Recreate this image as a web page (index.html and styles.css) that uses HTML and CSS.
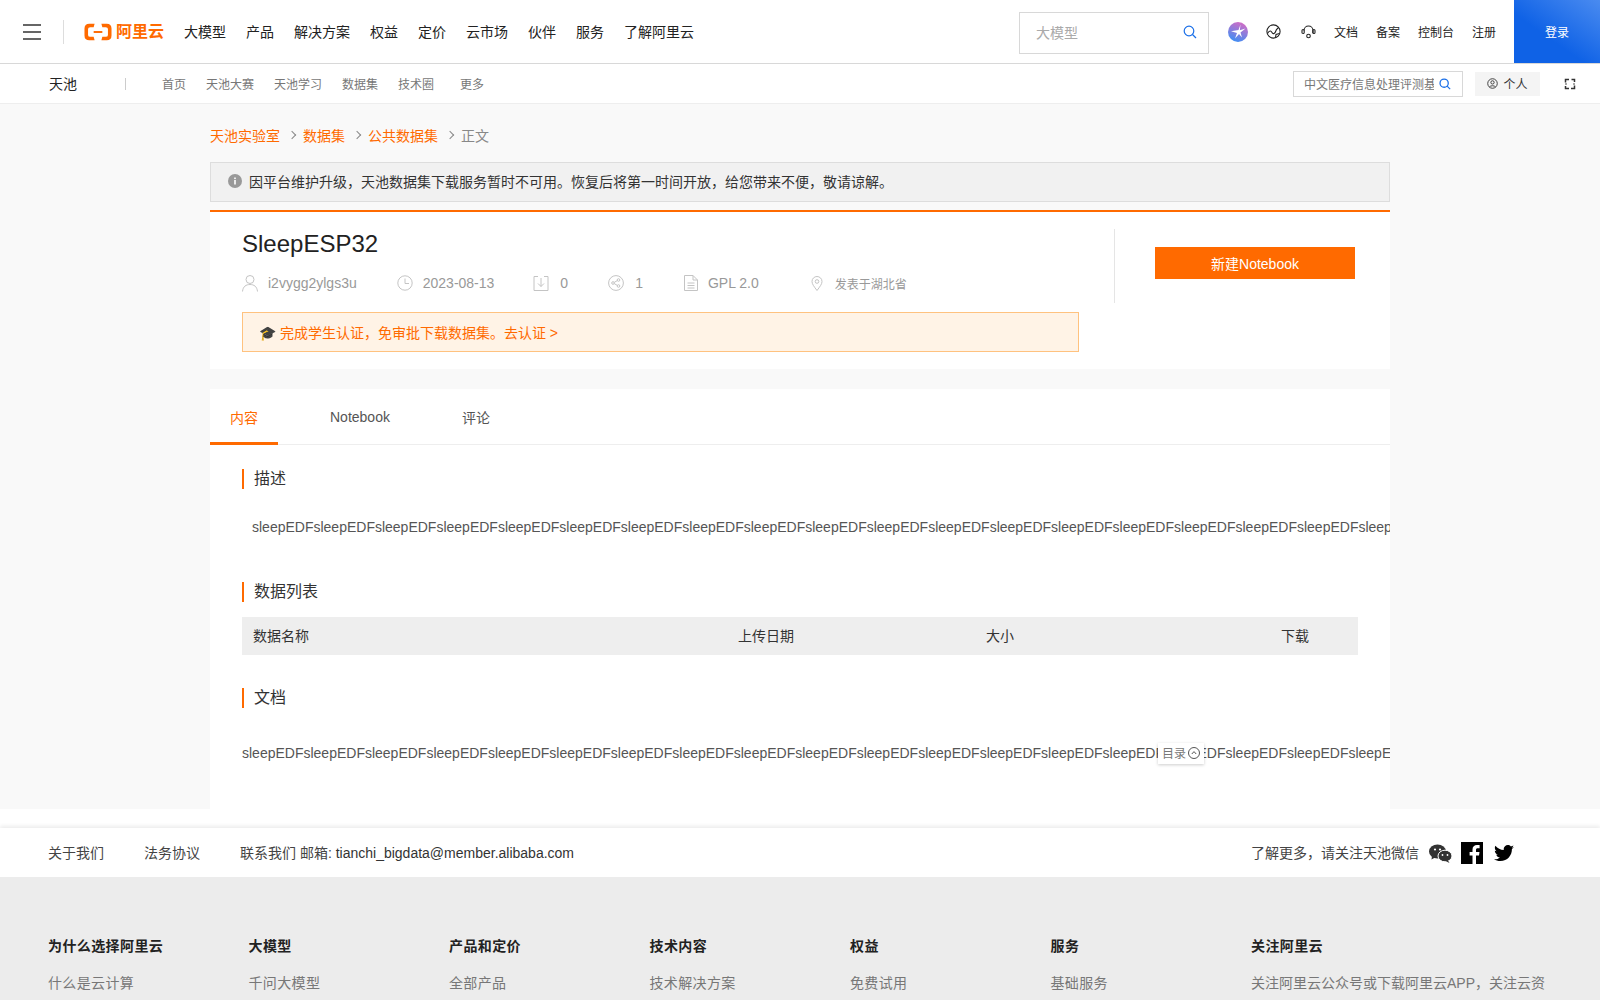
FILE: index.html
```html
<!DOCTYPE html>
<html lang="zh-CN">
<head>
    <meta charset="UTF-8">
    <meta name="viewport" content="width=device-width, initial-scale=1.0">
    <title>SleepESP32_数据集-阿里云天池</title>
    <link rel="stylesheet" href="styles.css">
</head>
<body>
<div class="page">

    <!-- 顶部导航 -->
    <header class="topbar">
        <div class="hamburger"><span></span><span></span><span></span></div>
        <div class="top-divider"></div>
        <a class="logo">
            <svg width="28" height="18" viewBox="0 0 29 18">
                <path d="M11 .5H5.500Q.5 .5 .5 5.500V12.500Q.5 17.500 5.500 17.500H11L10 14H6.500Q4.200 14 4.200 12V6Q4.200 4 6.500 4H10Z" fill="#ff6a00"/>
                <path d="M18 .5H23.500Q28.500 .5 28.500 5.500V12.500Q28.500 17.500 23.500 17.500H18L19 14H22.500Q24.800 14 24.800 12V6Q24.800 4 22.500 4H19Z" fill="#ff6a00"/>
                <rect x="10" y="8" width="9" height="2" fill="#ff6a00"/>
            </svg>
            <span class="logo-text">阿里云</span>
        </a>
        <nav class="main-nav">
            <a>大模型</a><a>产品</a><a>解决方案</a><a>权益</a><a>定价</a><a>云市场</a><a>伙伴</a><a>服务</a><a>了解阿里云</a>
        </nav>
        <div class="top-search">
            <span class="top-search-text">大模型</span>
            <svg width="14" height="14" viewBox="0 0 14 14" fill="none" stroke="#1a6fe8" stroke-width="1.2"><circle cx="6" cy="6" r="4.8"/><path d="M9.500 9.500L13 13"/></svg>
        </div>
        <div class="top-tools">
            <svg class="tool-ai" width="20" height="20" viewBox="0 0 20 20">
                <defs><linearGradient id="aiGrad" x1="0.7" y1="0" x2="0.3" y2="1"><stop offset="0" stop-color="#d56cc4"/><stop offset="1" stop-color="#3b8ff5"/></linearGradient></defs>
                <circle cx="10" cy="10" r="10" fill="url(#aiGrad)"/>
                <path d="M12.500 2.500L10.500 8L3 9.200L9 11L7 16.500L11 12L14 15.500L12.500 10.500L17.500 6.500L11.800 8.200Z" fill="#fff"/>
            </svg>
            <svg class="tool-globe" width="15" height="15" viewBox="0 0 15 15" fill="none" stroke="#222" stroke-width="1.100"><circle cx="7.500" cy="7.500" r="6.600"/><path d="M1.500 9.500C3.500 6 5 6.500 6 8.500S9 10 10.500 5.500L12.500 3.500M9.500 13.500L10 10.500L13.500 9.500"/></svg>
            <svg class="tool-head" width="15" height="15" viewBox="0 0 15 15" fill="none" stroke="#222" stroke-width="1.100"><path d="M3 6.500A4.500 4.500 0 0 1 12 6.500V9"/><rect x="1" y="5.500" width="2.200" height="4" rx="1.100"/><rect x="11.800" y="5.500" width="2.200" height="4" rx="1.100"/><circle cx="7.500" cy="12" r="1.800"/></svg>
            <a>文档</a><a>备案</a><a>控制台</a><a>注册</a>
        </div>
        <a class="login-btn">登录</a>
    </header>

    <!-- 天池导航 -->
    <div class="subbar">
        <span class="sub-brand">天池</span>
        <span class="sub-divider"></span>
        <nav class="sub-nav">
            <a>首页</a><a>天池大赛</a><a>天池学习</a><a>数据集</a><a>技术圈</a><a class="sub-more">更多</a>
        </nav>
        <div class="sub-search">
            <span>中文医疗信息处理评测基</span>
            <svg width="12" height="12" viewBox="0 0 14 14" fill="none" stroke="#1a6fe8" stroke-width="1.500"><circle cx="6" cy="6" r="4.800"/><path d="M9.500 9.500L13 13"/></svg>
        </div>
        <a class="sub-personal">
            <svg width="11" height="11" viewBox="0 0 12 12" fill="none" stroke="#333" stroke-width="1"><circle cx="6" cy="6" r="5.200"/><circle cx="6" cy="4.800" r="1.800"/><path d="M2.800 9.800C3.600 8 8.400 8 9.200 9.800"/></svg>
            个人
        </a>
        <svg class="sub-switch" width="12" height="12" viewBox="0 0 12 12" fill="none" stroke="#333" stroke-width="1.500"><path d="M5 1.500H1.500V4.500M7.500 1.500H10.500V4M5 10.500H1.500V8M7 10.500H10.500V7.500"/><circle cx="2" cy="6" r=".8" fill="#333" stroke="none"/><circle cx="10" cy="6" r=".8" fill="#333" stroke="none"/></svg>
    </div>

    <main class="main">
        <div class="breadcrumb">
            <a>天池实验室</a><i class="crumb-arrow"></i><a>数据集</a><i class="crumb-arrow"></i><a>公共数据集</a><i class="crumb-arrow"></i><span>正文</span>
        </div>

        <div class="notice">
            <svg width="14" height="14" viewBox="0 0 14 14"><circle cx="7" cy="7" r="7" fill="#999"/><rect x="6.200" y="6" width="1.600" height="4.500" fill="#fff"/><rect x="6.200" y="3.500" width="1.600" height="1.600" fill="#fff"/></svg>
            <span>因平台维护升级，天池数据集下载服务暂时不可用。恢复后将第一时间开放，给您带来不便，敬请谅解。</span>
        </div>

        <section class="head-card">
            <div class="head-left">
                <h1>SleepESP32</h1>
                <div class="meta">
                    <span class="meta-item meta-user">
                        <svg width="16" height="18" viewBox="0 0 16 18" fill="none" stroke="#c4c4c4"><circle cx="8" cy="5.500" r="4"/><path d="M.5 17.500C1 12.500 4 10.500 8 10.500S15 12.500 15.500 17.500"/></svg>
                        i2vygg2ylgs3u
                    </span>
                    <span class="meta-item meta-date">
                        <svg width="16" height="16" viewBox="0 0 16 16" fill="none" stroke="#c4c4c4"><circle cx="8" cy="8" r="7.200"/><path d="M8 3.500V8.500H12"/></svg>
                        2023-08-13
                    </span>
                    <span class="meta-item meta-down">
                        <svg width="16" height="16" viewBox="0 0 16 16" fill="none" stroke="#c4c4c4"><path d="M5 1.500H1V15.500H15V1.500H11M8 3V11.500M5 8.500L8 11.500L11 8.500"/></svg>
                        0
                    </span>
                    <span class="meta-item meta-share">
                        <svg width="16" height="16" viewBox="0 0 16 16" fill="none" stroke="#c4c4c4"><circle cx="8" cy="8" r="7.400"/><circle cx="5" cy="8" r="1.300"/><circle cx="10.500" cy="5" r="1.300"/><circle cx="10.500" cy="11" r="1.300"/><path d="M6.200 7.400L9.300 5.600M6.200 8.600L9.300 10.400"/></svg>
                        1
                    </span>
                    <span class="meta-item meta-license">
                        <svg width="14" height="16" viewBox="0 0 14 16" fill="none" stroke="#c4c4c4"><path d="M.5 .5H9L13.500 5V15.500H.5ZM9 .5V5H13.500M3.500 8H10.500M3.500 10.500H10.500M3.500 13H10.500"/></svg>
                        GPL 2.0
                    </span>
                    <span class="meta-item meta-place">
                        <svg width="12" height="15" viewBox="0 0 12 15" fill="none" stroke="#c4c4c4"><path d="M6 14.500C3 10.500 1 8 1 5.500A5 5 0 0 1 11 5.500C11 8 9 10.500 6 14.500Z"/><circle cx="6" cy="5.500" r="1.800"/></svg>
                        <small>发表于湖北省</small>
                    </span>
                </div>
                <div class="student-tip">🎓 完成学生认证，免审批下载数据集。去认证 &gt;</div>
            </div>
            <div class="head-right">
                <a class="new-notebook">新建Notebook</a>
            </div>
        </section>

        <section class="content-card">
            <div class="tabs">
                <a class="tab tab-active">内容</a>
                <a class="tab">Notebook</a>
                <a class="tab">评论</a>
            </div>
            <div class="content-body">
                <h2 class="block-title">描述</h2>
                <p class="desc-text">sleepEDFsleepEDFsleepEDFsleepEDFsleepEDFsleepEDFsleepEDFsleepEDFsleepEDFsleepEDFsleepEDFsleepEDFsleepEDFsleepEDFsleepEDFsleepEDFsleepEDFsleepEDFsleepEDFsleepEDF</p>

                <h2 class="block-title block-list">数据列表</h2>
                <div class="table-head">
                    <span class="col-name">数据名称</span>
                    <span class="col-date">上传日期</span>
                    <span class="col-size">大小</span>
                    <span class="col-down">下载</span>
                </div>

                <h2 class="block-title block-doc">文档</h2>
                <p class="doc-text">sleepEDFsleepEDFsleepEDFsleepEDFsleepEDFsleepEDFsleepEDFsleepEDFsleepEDFsleepEDFsleepEDFsleepEDFsleepEDFsleepEDFsleepEDFsleepEDFsleepEDFsleepEDFsleepEDFsleepEDF</p>
            </div>
            <div class="toc-btn">
                目录
                <svg width="12" height="12" viewBox="0 0 12 12" fill="none" stroke="#555"><circle cx="6" cy="6" r="5.500"/><path d="M3.800 7L6 4.600L8.200 7"/></svg>
            </div>
        </section>
    </main>

    <!-- 页脚 -->
    <div class="foot-bar">
        <a>关于我们</a>
        <a>法务协议</a>
        <span>联系我们 邮箱: <span class="foot-mail">tianchi_bigdata@member.alibaba.com</span></span>
        <div class="foot-follow">
            <span>了解更多，请关注天池微信</span>
            <svg class="foot-wechat" width="23" height="19" viewBox="0 0 23 19" fill="#333">
                <ellipse cx="8.500" cy="7.500" rx="8.500" ry="7"/><path d="M3 12L2.500 15.500L7 13Z"/>
                <ellipse cx="16" cy="12" rx="7" ry="5.800" stroke="#fff"/><path d="M19 16.500L20.500 19L16.500 17Z"/>
                <circle cx="6" cy="5.500" r="1.100" fill="#fff"/><circle cx="11" cy="5.500" r="1.100" fill="#fff"/>
                <circle cx="13.500" cy="11" r=".9" fill="#fff"/><circle cx="18.500" cy="11" r=".9" fill="#fff"/>
            </svg>
            <svg class="foot-fb" width="22" height="22" viewBox="0 0 22 22"><rect width="22" height="22" fill="#000"/><path d="M15 22V13.500H18L18.500 10H15V8C15 6.800 15.500 6.200 16.800 6.200H18.600V3.100C18 3 17 2.900 16 2.900C13.400 2.900 11.500 4.500 11.500 7.500V10H8.600V13.500H11.500V22Z" fill="#fff"/></svg>
            <svg class="foot-tw" width="20" height="17" viewBox="0 0 20 17" fill="#000"><path d="M20 2C19.300 2.300 18.500 2.600 17.700 2.700C18.500 2.200 19.200 1.400 19.500 .4C18.700 .9 17.800 1.200 16.900 1.400C15.300 -.3 12.600 -.4 11 1.200C9.900 2.200 9.500 3.700 9.800 5.100C6.600 4.900 3.500 3.400 1.400 .8C.3 2.600 .9 5 2.600 6.200C2 6.200 1.300 6 .8 5.700C.8 7.600 2.200 9.300 4 9.700C3.400 9.900 2.800 9.900 2.200 9.800C2.700 11.400 4.200 12.500 5.900 12.500C4.100 13.900 2.200 14.500 0 14.300C1.800 15.500 4 16.100 6.300 16.100C13.800 16.100 18.100 9.700 17.900 4.100C18.700 3.500 19.400 2.800 20 2Z"/></svg>
        </div>
    </div>

    <footer class="footer">
        <div class="foot-col"><h4>为什么选择阿里云</h4><a>什么是云计算</a></div>
        <div class="foot-col"><h4>大模型</h4><a>千问大模型</a></div>
        <div class="foot-col"><h4>产品和定价</h4><a>全部产品</a></div>
        <div class="foot-col"><h4>技术内容</h4><a>技术解决方案</a></div>
        <div class="foot-col"><h4>权益</h4><a>免费试用</a></div>
        <div class="foot-col"><h4>服务</h4><a>基础服务</a></div>
        <div class="foot-col foot-col-last"><h4>关注阿里云</h4><a>关注阿里云公众号或下载阿里云APP，关注云资讯，随时随地运维管控云服务</a></div>
    </footer>
</div>
</body>
</html>
```

FILE: styles.css
```css
* {
    box-sizing: border-box;
}
html, body {
    margin: 0;
    padding: 0;
}
body {
    font-family: "Liberation Sans", "Noto Sans CJK SC", sans-serif;
    font-size: 14px;
    color: #333;
    background-color: #fff;
}
.page {
    height: 1000px;
    overflow: hidden;
}
svg {
    display: block;
    flex-shrink: 0;
}

/* 顶部导航 */
.topbar {
    display: flex;
    align-items: center;
    height: 64px;
    border-bottom: 1px solid #d8d8d8;
    background-color: #fff;
}
.hamburger {
    width: 18px;
    margin-left: 23px;
}
.hamburger span {
    display: block;
    height: 2px;
    margin: 5px 0;
    background-color: #666;
}
.top-divider {
    width: 1px;
    height: 24px;
    margin-left: 22px;
    background-color: #ddd;
}
.logo {
    display: flex;
    align-items: center;
    gap: 4px;
    margin-left: 20px;
}
.logo-text {
    font-size: 16px;
    font-weight: 700;
    line-height: 20px;
    color: #ff6a00;
}
.main-nav {
    display: flex;
    gap: 20px;
    margin-left: 20px;
    margin-top: -1px;
    color: #222;
}
.top-search {
    display: flex;
    align-items: center;
    justify-content: space-between;
    width: 190px;
    height: 42px;
    margin-left: auto;
    margin-top: 2px;
    padding: 0 11px 2px 16px;
    border: 1px solid #d8d8d8;
    color: #aaa;
}
.top-tools {
    display: flex;
    align-items: center;
    margin-left: 19px;
    font-size: 12px;
    color: #222;
}
.tool-globe {
    margin-left: 18px;
}
.tool-head {
    margin-left: 20px;
}
.top-tools a {
    margin-left: 18px;
}
.top-tools a:first-of-type {
    margin-left: 18px;
}
.login-btn {
    display: flex;
    align-items: center;
    justify-content: center;
    width: 86px;
    height: 63px;
    margin-left: 18px;
    margin-top: -1px;
    font-size: 12px;
    color: #fff;
    background: linear-gradient(35deg, #0f62e6 40%, #4a8bf0 100%);
}

/* 天池导航 */
.subbar {
    display: flex;
    align-items: center;
    height: 40px;
    border-bottom: 1px solid #eee;
    background-color: #fff;
}
.sub-brand {
    margin-left: 49px;
    margin-top: -2px;
    color: #222;
}
.sub-divider {
    width: 1px;
    height: 12px;
    margin-left: 48px;
    background-color: #ccc;
}
.sub-nav {
    display: flex;
    gap: 20px;
    margin-left: 36px;
    font-size: 12px;
    color: #777;
}
.sub-more {
    margin-left: 6px;
}
.sub-search {
    display: flex;
    align-items: center;
    justify-content: space-between;
    width: 170px;
    height: 26px;
    margin-left: auto;
    padding: 0 11px 0 10px;
    border: 1px solid #d8d8d8;
    font-size: 12px;
    color: #777;
}
.sub-search span {
    width: 130px;
    overflow: hidden;
    white-space: nowrap;
}
.sub-personal {
    display: flex;
    align-items: center;
    justify-content: center;
    gap: 5px;
    width: 65px;
    height: 24px;
    margin-left: 12px;
    font-size: 12px;
    color: #333;
    background-color: #f4f4f4;
}
.sub-switch {
    margin: 0 24px 0 24px;
}

/* 主体 */
.main {
    height: 705px;
    padding: 0 210px;
    background-color: #f9f9f9;
}
.breadcrumb {
    display: flex;
    align-items: center;
    height: 24px;
    padding-top: 19px;
    box-sizing: content-box;
    color: #ff6a00;
}
.breadcrumb span {
    color: #888;
}
.crumb-arrow {
    width: 6px;
    height: 6px;
    margin: 0 8px 0 9px;
    border-top: 1px solid #888;
    border-right: 1px solid #888;
    transform: rotate(45deg);
}
.notice {
    display: flex;
    align-items: center;
    gap: 7px;
    height: 40px;
    margin-top: 15px;
    padding-left: 17px;
    padding-bottom: 2px;
    border: 1px solid #ddd;
    background-color: #f1f1f1;
    color: #333;
}
.head-card {
    display: flex;
    height: 159px;
    margin-top: 8px;
    border-top: 2px solid #ff6a00;
    background-color: #fff;
}
.head-left {
    width: 904px;
    padding: 0 35px 0 32px;
}
h1 {
    margin: 17px 0 0;
    font-size: 24px;
    font-weight: 400;
    line-height: 30px;
    color: #222;
}
.meta {
    display: flex;
    align-items: center;
    height: 20px;
    margin-top: 14px;
    color: #999;
}
.meta-item {
    display: flex;
    align-items: center;
    gap: 10px;
}
.meta-date {
    margin-left: 40px;
}
.meta-down {
    margin-left: 39px;
}
.meta-down svg {
    margin-right: 1px;
}
.meta-share {
    margin-left: 40px;
}
.meta-share svg {
    margin-right: 1px;
}
.meta-license {
    margin-left: 41px;
}
.meta-place {
    margin-left: 52px;
}
.meta-place small {
    margin-left: 2px;
    font-size: 12px;
}
.student-tip {
    display: flex;
    align-items: center;
    height: 40px;
    margin-top: 19px;
    padding-left: 16px;
    padding-bottom: 1px;
    border: 1px solid #ffc27f;
    background-color: #fff3e6;
    color: #ff6a00;
}
.head-right {
    width: 276px;
    height: 74px;
    margin-top: 17px;
    padding: 18px 0 0 40px;
    border-left: 1px solid #e5e5e5;
}
.new-notebook {
    display: flex;
    align-items: center;
    justify-content: center;
    width: 200px;
    height: 32px;
    padding-bottom: 1px;
    color: #fff;
    background-color: #ff6a00;
}

/* 内容 */
.content-card {
    position: relative;
    height: 420px;
    margin-top: 20px;
    background-color: #fff;
    overflow: hidden;
}
.tabs {
    display: flex;
    height: 56px;
    border-bottom: 1px solid #eee;
    color: #555;
}
.tab {
    display: flex;
    align-items: center;
    height: 56px;
    padding: 0 20px;
    margin-right: 32px;
}
.tab-active {
    color: #ff6a00;
    border-bottom: 3px solid #ff6a00;
    padding-top: 2px;
}
.content-body {
    padding: 24px 0 0 32px;
}
.block-title {
    height: 20px;
    margin: 0;
    padding-left: 10px;
    border-left: 2px solid #ff6a00;
    font-size: 16px;
    font-weight: 400;
    line-height: 20px;
    color: #333;
}
.desc-text, .doc-text {
    margin: 0;
    line-height: 20px;
    color: #555;
    white-space: nowrap;
}
.desc-text {
    margin-top: 28px;
    padding-left: 10px;
}
.block-list {
    margin-top: 45px;
}
.table-head {
    position: relative;
    display: flex;
    align-items: center;
    width: 1116px;
    height: 38px;
    margin-top: 15px;
    padding-bottom: 2px;
    background-color: #eee;
}
.col-name {
    width: 496px;
    padding-left: 11px;
}
.col-date {
    width: 248px;
}
.col-size {
    width: 295px;
}
.block-doc {
    margin-top: 33px;
}
.doc-text {
    margin-top: 35px;
}
.toc-btn {
    position: absolute;
    top: 354px;
    left: 948px;
    display: flex;
    align-items: center;
    gap: 2px;
    width: 46px;
    height: 21px;
    padding: 0 0 2px 4px;
    font-size: 12px;
    color: #777;
    background-color: #fff;
    box-shadow: 0 1px 3px rgba(0, 0, 0, 0.2);
}

/* 页脚 */
.foot-bar {
    display: flex;
    align-items: center;
    height: 49px;
    margin-top: 19px;
    padding-left: 48px;
    padding-bottom: 2px;
    gap: 40px;
    background-color: #fff;
    box-shadow: 0 -2px 4px rgba(0, 0, 0, 0.08);
    color: #444;
}
.foot-mail {
    color: #333;
}
.foot-follow {
    display: flex;
    align-items: center;
    margin-left: auto;
    padding-right: 86px;
}
.foot-wechat {
    margin-left: 10px;
    margin-top: 4px;
}
.foot-fb {
    margin-left: 9px;
    margin-top: 2px;
}
.foot-tw {
    margin-left: 11px;
    margin-top: 4px;
}
.footer {
    display: flex;
    height: 140px;
    padding: 59px 0 0 48px;
    background-color: #ececec;
}
.foot-col {
    width: 200.5px;
}
.foot-col h4 {
    margin: 0 0 17px;
    font-size: 14px;
    font-weight: 700;
    line-height: 20px;
    letter-spacing: 0.4px;
    color: #222;
}
.foot-col a {
    display: block;
    line-height: 20px;
    letter-spacing: 0.35px;
    color: #777;
}
.foot-col-last {
    width: 294px;
}
.foot-col-last a {
    line-height: 30px;
    margin-top: -5px;
    letter-spacing: 0;
}
```
